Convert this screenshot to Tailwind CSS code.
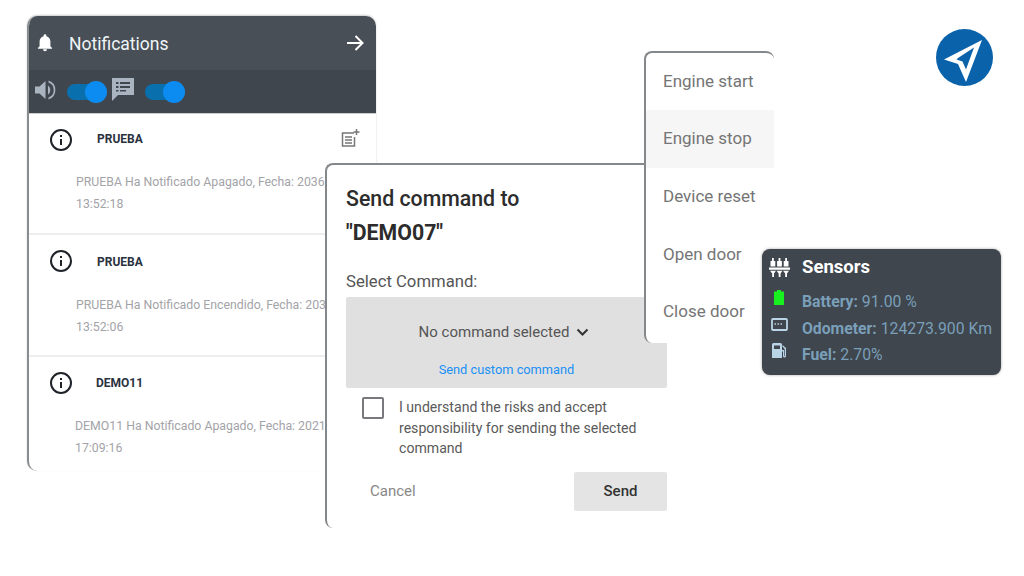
<!DOCTYPE html>
<html lang="en">
<head>
    <meta charset="UTF-8">
    <meta name="viewport" content="width=device-width, initial-scale=1.0">
    <script src="https://cdn.jsdelivr.net/npm/@tailwindcss/browser@4"></script>
    <title>Notifications and commands</title>
</head>
<body class="bg-white">
<div class="relative w-[1024px] h-[576px] overflow-hidden bg-white font-['Roboto',sans-serif]">

    <!-- notifications window -->
    <div class="absolute left-[27px] top-[16px] w-[349px] h-[455px] rounded-[10px] overflow-hidden bg-white border-l-2 border-[#8a8d90] shadow-[0_-1px_2px_rgba(0,0,0,0.2)]">
        <div class="h-[54px] bg-[#484f57] flex items-center pl-[6px] pr-[12px] text-white">
            <svg class="w-[20px] h-[20px]" viewBox="0 0 24 24" fill="#fff"><path d="M12 22a2.400 2.400 0 0 0 2.400-2.400H9.600A2.400 2.400 0 0 0 12 22zM18.500 16v-5.500c0-3.300-1.800-5.900-4.800-6.600V3.200a1.700 1.700 0 0 0-3.400 0v.7c-3 .7-4.800 3.300-4.800 6.600V16L3.500 18v.8h17V18z"/></svg>
            <span class="ml-[14px] mt-[2px] text-[17.500px] text-[#f0f6f8]">Notifications</span>
            <svg class="ml-auto w-[18px] h-[18px]" viewBox="0 0 18 18" fill="none" stroke="#fff" stroke-width="2"><path d="M1 9h15M9.500 2l7 7-7 7"/></svg>
        </div>
        <div class="h-[43px] bg-[#40464d] flex items-center pl-[5px]">
            <svg class="w-[22px] h-[22px] mb-[3px]" viewBox="0 0 22 22" fill="#a9b4c0"><path d="M1 7.500v7h4.500l6 5.500V2L5.500 7.500z"/><path d="M14 6.500a5.500 5.500 0 0 1 0 9z"/><path d="M14.500 1.500a10 10 0 0 1 0 19v-2a8 8 0 0 0 0-15z"/></svg>
            <div class="relative ml-[11px] w-[40px] h-[16px] rounded-full bg-[#0a70ad]"><div class="absolute right-0 top-[-3px] w-[22px] h-[22px] rounded-full bg-[#0c8cf0]"></div></div>
            <svg class="ml-[4px] mb-[6px] w-[24px] h-[26px]" viewBox="0 0 24 26" fill="#a9b4c0"><path d="M1 2h22v17H7l-6 6z"/><path fill="#40464d" d="M5 6h2.500v2H5zm4 0h10v2H9zM5 10h2.500v2H5zm4 0h10v2H9zm-4 4h2.500v1.500H5zm4 0h6v1.500H9z"/></svg>
            <div class="relative ml-[10px] w-[40px] h-[16px] rounded-full bg-[#0a70ad]"><div class="absolute right-0 top-[-3px] w-[22px] h-[22px] rounded-full bg-[#0c8cf0]"></div></div>
        </div>
        <div class="border-t border-[#c9cbcd]">
            <div class="h-[121px] border-b-2 border-[#eeeeee] pl-[20px] pt-[14px] relative">
                <div class="flex items-center gap-[24px]">
                    <svg class="w-[24px] h-[24px]" viewBox="0 0 24 24" fill="none" stroke="#1f2329" stroke-width="2"><circle cx="12" cy="12" r="10"/><path d="M12 11v6M12 7v2"/></svg>
                    <span class="mb-[2px] text-[12px] font-bold text-[#2a3240]">PRUEBA</span>
                </div>
                <svg class="absolute right-[16px] top-[14px] w-[20px] h-[20px]" viewBox="0 0 20 20" fill="none" stroke="#777" stroke-width="1.500"><path d="M14 5H2.500v13h12V9M5 9h7M5 12h7M5 15h7M16.500 1v6M13.500 4h6"/></svg>
                <div class="ml-[27px] mt-[19px] w-[270px] text-[12.300px] leading-[22px] text-[#a3a3a8] whitespace-nowrap">PRUEBA Ha Notificado Apagado, Fecha: 2036<br>13:52:18</div>
            </div>
            <div class="h-[122px] border-b-2 border-[#eeeeee] pl-[20px] pt-[14px]">
                <div class="flex items-center gap-[24px]">
                    <svg class="w-[24px] h-[24px]" viewBox="0 0 24 24" fill="none" stroke="#1f2329" stroke-width="2"><circle cx="12" cy="12" r="10"/><path d="M12 11v6M12 7v2"/></svg>
                    <span class="mt-[1px] text-[12px] font-bold text-[#2a3240]">PRUEBA</span>
                </div>
                <div class="ml-[27px] mt-[21px] w-[270px] text-[12.300px] leading-[22px] text-[#a3a3a8] whitespace-nowrap">PRUEBA Ha Notificado Encendido, Fecha: 203<br>13:52:06</div>
            </div>
            <div class="pl-[20px] pt-[14px]">
                <div class="flex items-center gap-[23px]">
                    <svg class="w-[24px] h-[24px]" viewBox="0 0 24 24" fill="none" stroke="#1f2329" stroke-width="2"><circle cx="12" cy="12" r="10"/><path d="M12 11v6M12 7v2"/></svg>
                    <span class="text-[12px] font-bold text-[#2a3240]">DEMO11</span>
                </div>
                <div class="ml-[26px] mt-[20px] w-[270px] text-[12.300px] leading-[22px] text-[#a3a3a8] whitespace-nowrap">DEMO11 Ha Notificado Apagado, Fecha: 2021<br>17:09:16</div>
            </div>
        </div>
    </div>

    <!-- send command dialog -->
    <div class="absolute left-[325px] top-[163px] w-[343px] h-[365px] rounded-[8px] bg-white border-l-2 border-t-2 border-[#85888b] pl-[19px]">
        <div class="mt-[17px] text-[21.300px] leading-[34px] font-medium text-[#2c2c2c]">Send command to<br><span class="font-bold">"DEMO07"</span></div>
        <div class="mt-[22px] text-[16.700px] leading-[20px] text-[#555555]">Select Command:</div>
        <div class="mt-[5px] w-[321px] h-[91px] rounded-[2px] bg-[#e0e0e0] flex flex-col items-center">
            <div class="mt-[25px] mr-[5px] flex items-center gap-[7px] text-[15px] leading-[20px] text-[#555555]">
                No command selected
                <svg class="w-[13px] h-[9px]" viewBox="0 0 13 9" fill="none" stroke="#333" stroke-width="2"><path d="M1.500 1.500l5 5 5-5"/></svg>
            </div>
            <div class="mt-[19px] text-[12.800px] leading-[18px] text-[#1a90f5]">Send custom command</div>
        </div>
        <div class="mt-[7px] ml-[16px] flex items-start">
            <div class="mt-[2px] w-[22px] h-[22px] shrink-0 rounded-[2px] border-2 border-[#77797c] bg-white"></div>
            <div class="ml-[15px] mt-[2px] w-[252px] text-[14.100px] leading-[20.500px] text-[#5a5a5a]">I understand the risks and accept responsibility for sending the selected command</div>
        </div>
        <div class="mt-[13px] flex items-center">
            <span class="ml-[24px] text-[15px] text-[#888888]">Cancel</span>
            <div class="ml-auto mr-[1px] w-[93px] h-[39px] rounded-[2px] bg-[#e4e4e4] flex items-center justify-center text-[15px] font-medium text-[#333333]">Send</div>
        </div>
    </div>

    <!-- commands menu -->
    <div class="absolute left-[644px] top-[51px] w-[130px] h-[292px] rounded-[8px] bg-white border-l-2 border-t-2 border-[#85888b] text-[17px] text-[#757575]">
        <div class="h-[57px] pl-[17px] flex items-center">Engine start</div>
        <div class="h-[58px] pl-[17px] flex items-center bg-[#f6f6f6]">Engine stop</div>
        <div class="h-[58px] pl-[17px] flex items-center">Device reset</div>
        <div class="h-[57px] pl-[17px] flex items-center">Open door</div>
        <div class="h-[58px] pl-[17px] flex items-center">Close door</div>
    </div>

    <!-- sensors tooltip -->
    <div class="absolute left-[762px] top-[249px] w-[239px] h-[126px] rounded-[8px] bg-[#3f464d] shadow-[0_0_3px_rgba(0,0,0,0.35)] pl-[7px] pt-[8px]">
        <div class="flex items-center h-[22px]">
            <svg class="mb-[2px] w-[21px] h-[19px]" viewBox="0 0 21 19" fill="#fff"><path d="M3 0h1.800v3H3zm6.600 0h1.800v3H9.600zm6.600 0h1.800v3h-1.800zM1.500 3h4.800v5.500H1.500zm6.600 0h4.800v5.500H8.100zm6.600 0h4.800v5.500h-4.800zM0 9.500h21v2.300H0zM1 12.800h6L5 15.500V19H3.200v-3.500zm6.500 0h6l-2 2.700V19H9.700v-3.500zm6.500 0h6l-2 2.700V19h-1.800v-3.500z"/></svg>
            <span class="ml-[12px] text-[18.500px] font-bold text-white">Sensors</span>
        </div>
        <div class="mt-[10px] flex items-center h-[26.500px] text-[15.750px] text-[#7a9fb9]">
            <div class="w-[33px]"><svg class="ml-[5px] mb-[9px] w-[10px] h-[15px]" viewBox="0 0 10 15" fill="#19f01f"><path d="M3 0h4v1.500h3V15H0V1.500h3z"/></svg></div>
            <span><b class="font-bold">Battery:</b> 91.00 %</span>
        </div>
        <div class="flex items-center h-[26.500px] text-[15.750px] text-[#7a9fb9]">
            <div class="w-[33px]"><svg class="ml-[2px] mb-[9px] w-[17px] h-[13px]" viewBox="0 0 17 13" fill="none" stroke="#b9d4e6" stroke-width="1.800"><rect x="1" y="1" width="15" height="11" rx="1"/><path d="M3.500 6h1.500M6.500 6h1.500M9.500 6h1.500" stroke-width="1.300"/></svg></div>
            <span><b class="font-bold">Odometer:</b> 124273.900 Km</span>
        </div>
        <div class="flex items-center h-[26.500px] text-[15.750px] text-[#7a9fb9]">
            <div class="w-[33px]"><svg class="ml-[3px] mb-[9px] w-[14px] h-[15px]" viewBox="0 0 14 15" fill="#b9d4e6"><path d="M0 1.500A1.500 1.500 0 0 1 1.500 0h7A1.500 1.500 0 0 1 10 1.500V15H0zM2 2.500v3.500h6V2.500z"/><path d="M10.500 2L14 5v8a1.500 1.500 0 0 1-3 0V8.500h-1V7h2v6h.7V6l-2.200-2.500z"/></svg></div>
            <span><b class="font-bold">Fuel:</b> 2.70%</span>
        </div>
    </div>

    <!-- logo -->
    <div class="absolute left-[936px] top-[29px] w-[57px] h-[57px] rounded-full bg-[#0a62ab] flex items-center justify-center">
        <svg class="w-[57px] h-[57px]" viewBox="0 0 57 57" fill="#fff"><path fill-rule="evenodd" d="M46 11L8 30.500l14 4.500 8 18zM38 18.500L22 29l-1.500 1.500 6 2 3.500 8z"/></svg>
    </div>
</div>
</body>
</html>
